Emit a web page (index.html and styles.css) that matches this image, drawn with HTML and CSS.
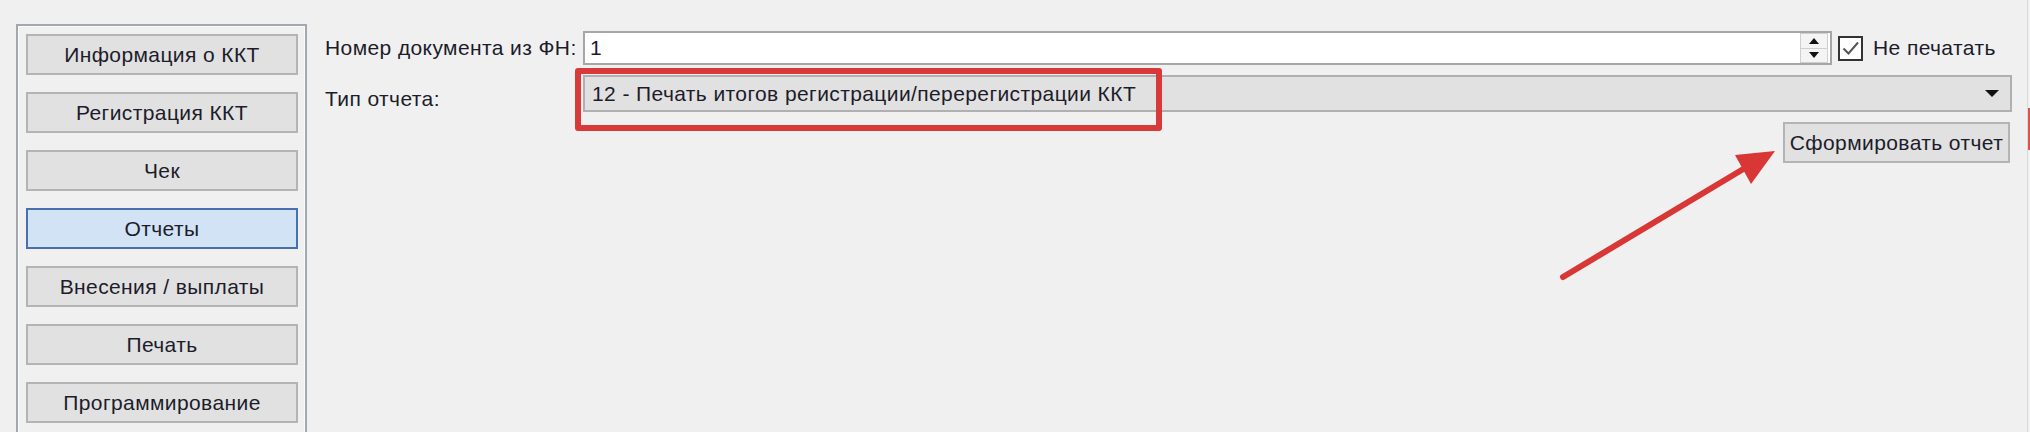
FILE: index.html
```html
<!DOCTYPE html>
<html lang="ru">
<head>
<meta charset="utf-8">
<title>Отчеты</title>
<link rel="stylesheet" href="styles.css">
</head>
<body>
<div class="window">
  <nav class="sidebar">
    <button class="nav-btn">Информация о ККТ</button>
    <button class="nav-btn">Регистрация ККТ</button>
    <button class="nav-btn">Чек</button>
    <button class="nav-btn active">Отчеты</button>
    <button class="nav-btn">Внесения / выплаты</button>
    <button class="nav-btn">Печать</button>
    <button class="nav-btn">Программирование</button>
  </nav>
  <main class="content">
    <div class="form">
      <label class="label">Номер документа из ФН:</label>
      <div class="row-one">
        <div class="spin-input">
          <span class="value">1</span>
          <span class="spinner">
            <span class="spin-up"></span>
            <span class="spin-down"></span>
          </span>
        </div>
        <div class="check-group">
          <span class="checkbox">
            <svg width="21" height="21" viewBox="0 0 21 21"><path d="M3.5 10.5 L8.5 15.5 L18 4.5" fill="none" stroke="#555" stroke-width="2"/></svg>
          </span>
          <span class="check-label">Не печатать</span>
        </div>
      </div>
      <label class="label label-type">Тип отчета:</label>
      <div class="combo-wrap">
        <div class="combo">
          <span class="combo-text">12 - Печать итогов регистрации/перерегистрации ККТ</span>
          <span class="combo-arrow"></span>
        </div>
        <div class="highlight"></div>
      </div>
      <div class="actions">
        <button class="action-btn">Сформировать отчет</button>
      </div>
    </div>
    <svg class="pointer" width="2030" height="432" viewBox="0 0 2030 432">
      <line x1="1563" y1="277" x2="1745" y2="168" stroke="#d93636" stroke-width="6" stroke-linecap="round"/>
      <polygon points="1775,151 1735,155 1751,184" fill="#d93636"/>
    </svg>
  </main>
  <div class="edge"><span class="edge-mark"></span></div>
</div>
</body>
</html>
```

FILE: styles.css
```css
* { box-sizing: border-box; }

html, body {
  margin: 0;
  padding: 0;
  width: 2030px;
  height: 432px;
  overflow: hidden;
  background: #f0f0f0;
}

body {
  font-family: "Liberation Sans", Arial, sans-serif;
  font-size: 21px;
  letter-spacing: 0.4px;
  color: #1c1c2a;
}

.window {
  display: flex;
  height: 432px;
  position: relative;
}

.sidebar {
  margin: 24px 0 0 16px;
  width: 291px;
  height: 408px;
  border: 2px solid #a3a7ae;
  border-bottom: none;
  box-shadow: inset 1px 1px 0 #fbfbfb, inset -1px 0 0 #fbfbfb;
  padding: 8px 7px 0 8px;
  display: flex;
  flex-direction: column;
  gap: 17px;
  overflow: hidden;
}

.nav-btn {
  flex: none;
  height: 41px;
  width: 272px;
  font: inherit;
  letter-spacing: inherit;
  color: inherit;
  background: #e1e1e1;
  border: 2px solid #b4b4b4;
  padding: 0;
  text-align: center;
}

.nav-btn.active {
  background: #d2e3f5;
  border-color: #4671ae;
}

.content {
  flex: 1;
  position: relative;
}

.form {
  margin: 31px 0 0 18px;
  width: 1687px;
  display: grid;
  grid-template-columns: 258px 1fr;
  row-gap: 10px;
  position: relative;
}

.label {
  display: flex;
  align-items: center;
  white-space: nowrap;
}

.label-type { padding-top: 10px; }

.row-one {
  display: flex;
  align-items: center;
  height: 34px;
}

.spin-input {
  flex: 1;
  height: 34px;
  background: #fff;
  border: 2px solid #a6a6a6;
  display: flex;
  align-items: center;
  padding-left: 5px;
  margin-right: 6px;
}

.spin-input .value { flex: 1; }

.spinner {
  width: 28px;
  height: 30px;
  margin-right: 2px;
  border: 1px solid #cfcfcf;
  background: #f4f4f4;
  display: flex;
  flex-direction: column;
}

.spin-up, .spin-down {
  flex: 1;
  display: flex;
  align-items: center;
  justify-content: center;
}

.spin-up { border-bottom: 1px solid #cfcfcf; }

.spin-up::after {
  content: "";
  border-left: 5px solid transparent;
  border-right: 5px solid transparent;
  border-bottom: 6px solid #111;
}

.spin-down::after {
  content: "";
  border-left: 5px solid transparent;
  border-right: 5px solid transparent;
  border-top: 6px solid #111;
}

.check-group {
  width: 174px;
  display: flex;
  align-items: center;
}

.checkbox {
  width: 25px;
  height: 25px;
  border: 2px solid #333;
  background: #fff;
  display: flex;
  align-items: center;
  justify-content: center;
}

.check-label {
  margin-left: 10px;
  white-space: nowrap;
}

.combo-wrap {
  position: relative;
}

.combo {
  height: 37px;
  background: #e1e1e1;
  border: 2px solid #b0b0b0;
  display: flex;
  align-items: center;
  padding: 0 10px 0 7px;
}

.combo-text { flex: 1; white-space: nowrap; }

.combo-arrow {
  border-left: 7px solid transparent;
  border-right: 7px solid transparent;
  border-top: 7px solid #111;
  margin-right: 1px;
}

.highlight {
  position: absolute;
  left: -8px;
  top: -7px;
  width: 587px;
  height: 63px;
  border: 6px solid #d83a3a;
  border-radius: 3px;
}

.actions {
  grid-column: 2;
  display: flex;
  justify-content: flex-end;
  padding-right: 2px;
}

.action-btn {
  height: 41px;
  width: 227px;
  font: inherit;
  letter-spacing: inherit;
  color: inherit;
  background: #e1e1e1;
  border: 2px solid #b4b4b4;
  padding: 0;
}

.pointer {
  position: absolute;
  left: -307px;
  top: 0;
  pointer-events: none;
}

.edge {
  width: 3px;
  height: 432px;
  border-left: 1px solid #dadada;
  position: relative;
}

.edge-mark {
  position: absolute;
  left: 0;
  top: 108px;
  width: 2px;
  height: 42px;
  background: #e05050;
}
```
